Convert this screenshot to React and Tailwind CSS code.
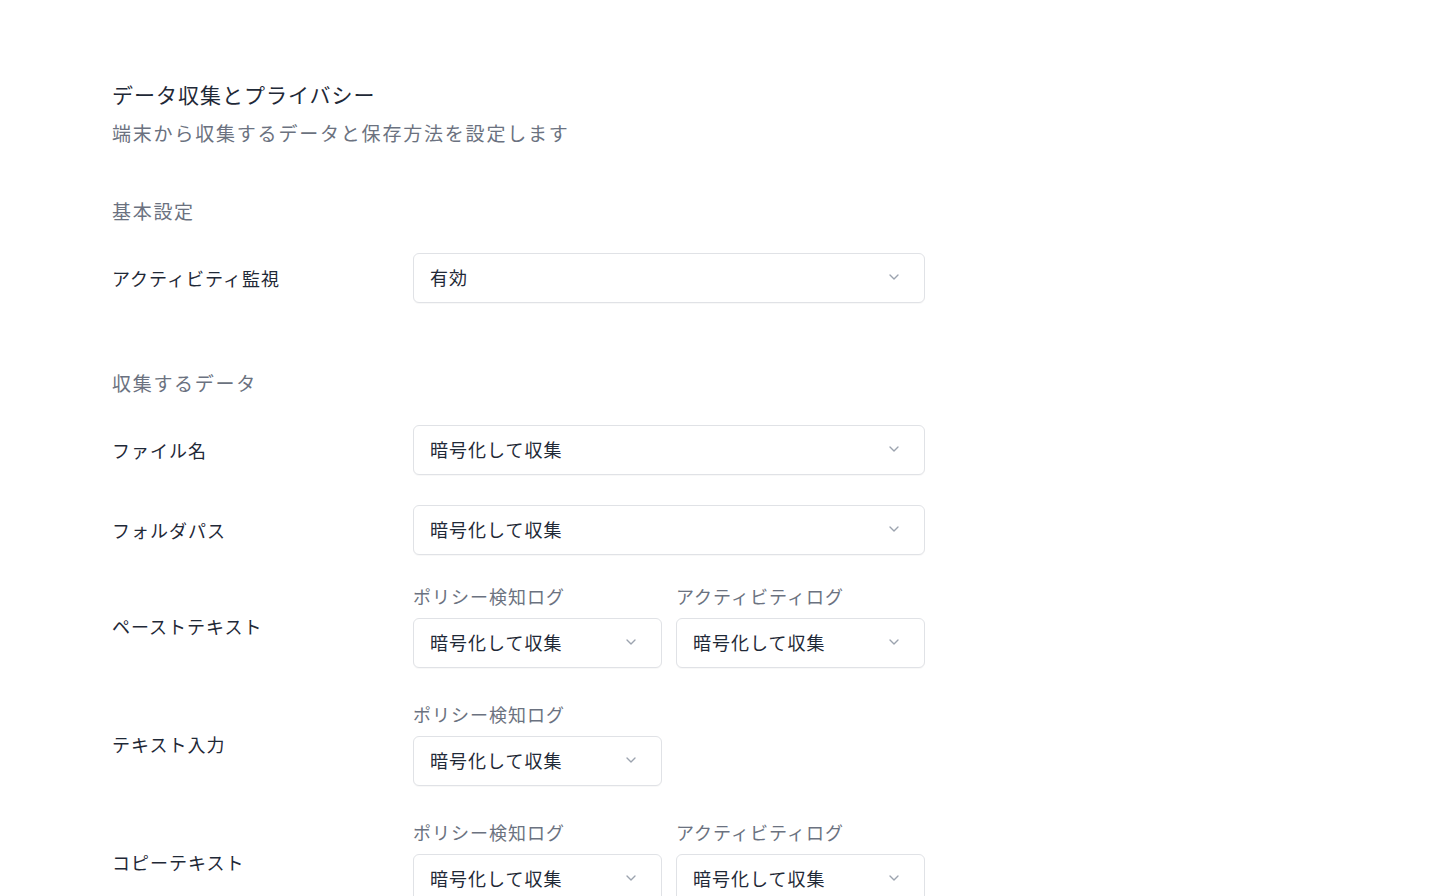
import React from "react";

const font = { fontFamily: '"Noto Sans CJK JP", "Noto Sans", sans-serif' };

const Chevron = () => (
  <svg width="16" height="16" viewBox="0 0 24 24" fill="none" stroke="#9ca3af" strokeWidth="2" strokeLinecap="round" strokeLinejoin="round">
    <path d="M6 9l6 6 6-6" />
  </svg>
);

const Select = ({ value, wide }) => (
  <div
    className={`flex items-center justify-between h-[50px] rounded-md border border-[#e0e2e6] bg-white pl-4 pr-[22px] pb-[2px] shadow-[0_1px_1px_rgba(0,0,0,0.03)] ${wide ? "w-[512px]" : "w-[249px]"}`}
  >
    <span className="text-[18px] tracking-[1px] text-[#1f2937]">{value}</span>
    <Chevron />
  </div>
);

const Row = ({ label, children, className = "" }) => (
  <div className={`flex items-center ${className}`}>
    <div className="w-[301px] text-[18px] tracking-[1px] text-[#1f2937]">{label}</div>
    {children}
  </div>
);

const Sub = ({ label, value }) => (
  <div className="flex flex-col gap-[11px]">
    <div className="text-[18px] leading-[22px] tracking-[1px] text-[#6b7280]">{label}</div>
    <Select value={value} />
  </div>
);

export default function App() {
  return (
    <div className="min-h-screen bg-white pl-[112px] pt-[80px]" style={font}>
      <h1 className="text-[21px] leading-[28px] font-normal tracking-[1px] text-[#1f2937]">データ収集とプライバシー</h1>
      <p className="mt-[12px] text-[19px] leading-[26px] tracking-[1.8px] text-[#6b7280]">端末から収集するデータと保存方法を設定します</p>

      <div className="mt-[52px] text-[19px] leading-[26px] tracking-[1.7px] text-[#6b7280]">基本設定</div>
      <Row label="アクティビティ監視" className="mt-[29px]">
        <Select value="有効" wide />
      </Row>

      <div className="mt-[67px] text-[19px] leading-[26px] tracking-[1.7px] text-[#6b7280]">収集するデータ</div>
      <Row label="ファイル名" className="mt-[29px]">
        <Select value="暗号化して収集" wide />
      </Row>
      <Row label="フォルダパス" className="mt-[30px]">
        <Select value="暗号化して収集" wide />
      </Row>
      <Row label="ペーストテキスト" className="mt-[30px]">
        <div className="flex gap-[14px]">
          <Sub label="ポリシー検知ログ" value="暗号化して収集" />
          <Sub label="アクティビティログ" value="暗号化して収集" />
        </div>
      </Row>
      <Row label="テキスト入力" className="mt-[35px]">
        <div className="flex gap-[14px]">
          <Sub label="ポリシー検知ログ" value="暗号化して収集" />
        </div>
      </Row>
      <Row label="コピーテキスト" className="mt-[35px]">
        <div className="flex gap-[14px]">
          <Sub label="ポリシー検知ログ" value="暗号化して収集" />
          <Sub label="アクティビティログ" value="暗号化して収集" />
        </div>
      </Row>
    </div>
  );
}
